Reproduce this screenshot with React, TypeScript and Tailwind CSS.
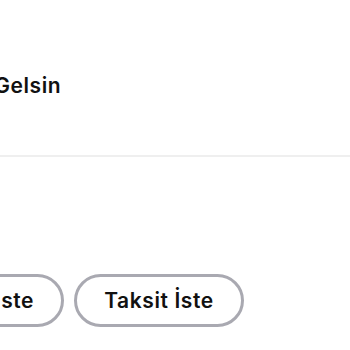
export default function App() {
  return (
    <div className="h-[350px] w-[350px] overflow-hidden bg-white font-['Inter',sans-serif] text-[#111]">
      <div className="pt-[72px]">
        <p className="-ml-[87px] text-[21px] font-semibold leading-[28px] tracking-[0.6px]">Hemen Gelsin</p>
      </div>
      <div className="mt-[55px] h-[2px] w-full bg-[#efefef]" />
      <div className="mt-[117px] flex gap-[10px]">
        <button className="-ml-[97px] h-[53px] shrink-0 rounded-full border-[3px] border-[#a9a9b1] px-[27px] text-[21px] font-semibold tracking-[0.6px]">
          Nakit İste
        </button>
        <button className="h-[53px] shrink-0 rounded-full border-[3px] border-[#a9a9b1] px-[27px] text-[21px] font-semibold tracking-[0.6px]">
          Taksit İste
        </button>
      </div>
    </div>
  );
}
